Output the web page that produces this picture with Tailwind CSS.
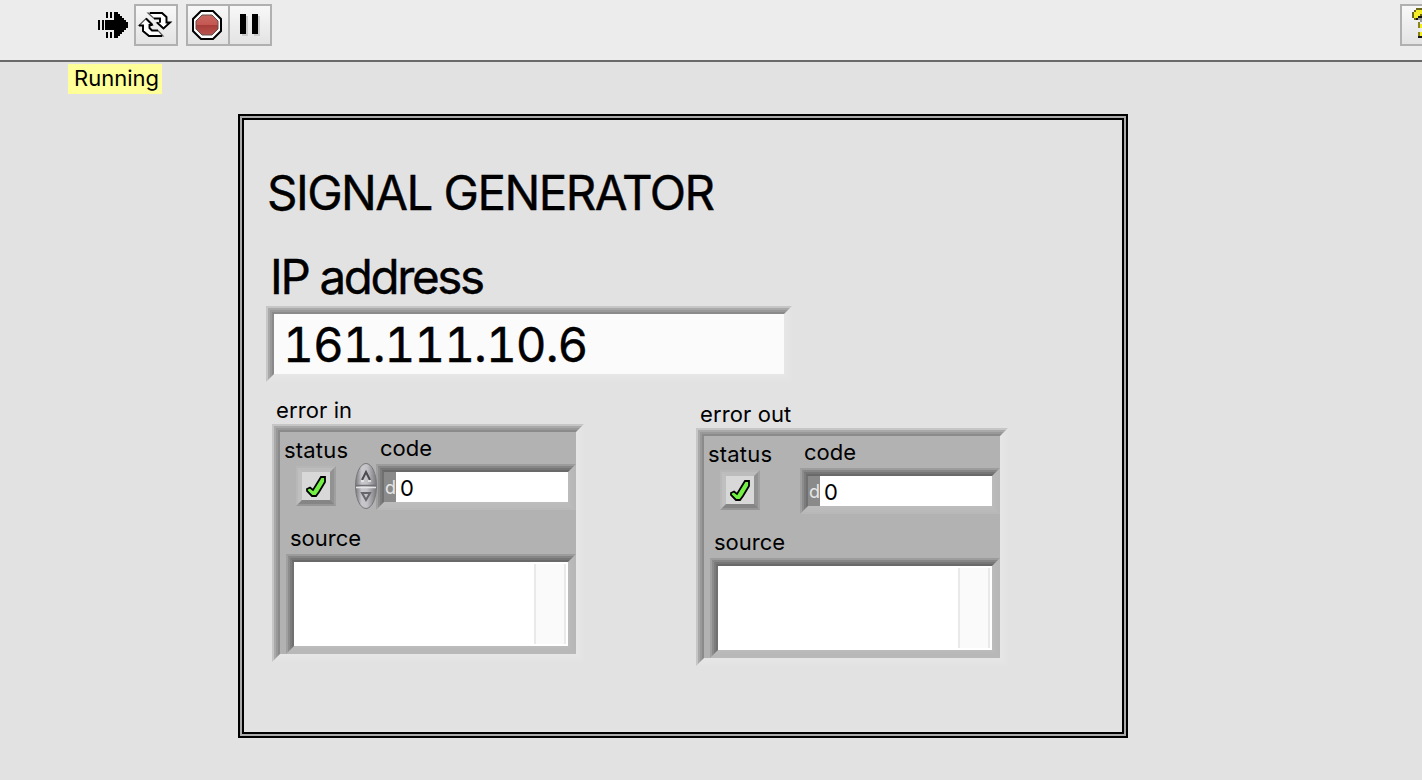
<!DOCTYPE html>
<html lang="en">
<head>
<meta charset="utf-8">
<title>Signal Generator</title>
<script src="https://cdn.jsdelivr.net/npm/@tailwindcss/browser@4"></script>
</head>
<body class="w-[1422px] h-[780px] overflow-hidden bg-[#e2e2e2] font-['Inter',sans-serif] text-black text-[22px] leading-[24px]">
<header class="h-[62px] border-b-2 border-[#6a6a6a] bg-[#ececec] flex items-start pt-1 pl-[96px]">
  <svg class="w-[34px] h-[42px] mr-1 shrink-0" viewBox="96 4 34 42" shape-rendering="crispEdges">
    <path d="M98 20h2v10h-2zM102 20h2v10h-2zM106 12h2v6h-2zM110 12h2v6h-2zM106 32h2v6h-2zM110 32h2v6h-2zM105 20h9v-8h4v2h2v2h2v2h2v2h2v2h2v6h-2v2h-2v2h-2v2h-2v2h-2v2h-4v-8h-9z"/>
  </svg>
  <div class="w-[44px] h-[42px] border-2 border-[#b0b0b0] bg-linear-to-b from-[#f8f8f8] to-[#e3e3e3] shrink-0">
    <svg class="w-[40px] h-[38px]" viewBox="2 2 40 38">
      <path d="M14 9H28L32.500 13V18.500H36L29.500 24.500L23 18.500H26V14.500H20ZM12 14.500L18.500 21H15.500V24L18 26.500H24L29 32H15L9 27V21.500H5Z" fill="#fff" stroke="#555" stroke-width="1.200"/>
      <path d="M16 9H28L32.500 13V18.500H36L29.500 24.500L23 18.500M20 14.500H26V18.500M5 21.500H9V27L15 32H28M18.500 21H15.500V24L18 26.500H24M12 14.500L18.500 21" fill="none" stroke="#000" stroke-width="1.900"/>
    </svg>
  </div>
  <div class="ml-2 w-[86px] h-[42px] border-2 border-[#b0b0b0] bg-linear-to-b from-[#f8f8f8] to-[#e3e3e3] flex shrink-0">
    <div class="w-[42px] border-r-2 border-[#b0b0b0]">
      <svg class="w-[40px] h-[38px]" viewBox="188 6 40 38">
        <defs><linearGradient id="red" x2="0" y2="1"><stop stop-color="#c96862"/><stop offset=".5" stop-color="#c45752"/><stop offset=".52" stop-color="#a83d39"/><stop offset="1" stop-color="#b95550"/></linearGradient></defs>
        <path d="M201 11h12l8 8v12l-8 8h-12l-8-8V19z" fill="#fff" stroke="#000" stroke-width="2"/>
        <path d="M202 15h10l6 6v8l-6 6h-10l-6-6v-8z" fill="url(#red)" stroke="#62504f" stroke-width="1"/>
      </svg>
    </div>
    <svg class="w-[40px] h-[38px]" viewBox="230 6 40 38" shape-rendering="crispEdges">
      <path d="M242 16h6v20h-6zM254 16h6v20h-6z" fill="#ccc"/><path d="M240 14h6v20h-6zM252 14h6v20h-6z"/>
    </svg>
  </div>
  <div class="ml-auto w-[22px] h-[42px] border-2 border-r-0 border-[#b0b0b0] bg-linear-to-b from-[#f8f8f8] to-[#e3e3e3] shrink-0">
    <svg class="w-[20px] h-[38px]" viewBox="1402 6 20 38" shape-rendering="crispEdges">
      <path d="M1416 8h6v2h-6zM1414 10h2v2h-2zM1412 12h2v6h-2zM1414 18h4v-2h2v-2h2v2h-2v2h-2v2h-4z" fill="#6b6716"/>
      <path d="M1416 10h6v4h-2v2h-2v2h-4v-6h2zM1420 24h2v4h-2zM1420 32h2v4h-2z" fill="#f5ec28"/>
      <path d="M1418 16h4v2h-2v2h-4v-2h2zM1418 36h4v2h-4z" fill="#111"/><path d="M1418 22h2v6h-2zM1418 32h2v4h-2z" fill="#8a841c"/><path d="M1418 18h4v4h-2v-2h-2z" fill="#999"/>
    </svg>
  </div>
</header>

<main>
  <div class="mt-[2px] ml-[68px] w-[94px] h-[30px] bg-[#ffff99] pl-[6px] pt-[2px] whitespace-nowrap">Running</div>
  <section class="mt-[20px] ml-[238px] w-[890px] h-[624px] border-2 border-black">
   <div class="h-full border-2 border-[#aaaaaa]">
    <div class="h-full border-2 border-black pl-[22px] pt-[49px]">
      <h1 class="pl-[1px] h-[48px] text-[47.500px] leading-[48px] tracking-[-1.550px] whitespace-nowrap [-webkit-text-stroke:0.400px_black]">SIGNAL GENERATOR</h1>
      <h2 class="pl-[4px] mt-[36px] h-[48px] text-[47.500px] leading-[48px] tracking-[-2.350px] whitespace-nowrap [-webkit-text-stroke:0.400px_black]">IP address</h2>
      <div class="mt-[5px] w-[526px] h-[76px] border-2 border-t-[#c6c6c6] border-l-[#c6c6c6] border-r-[#e3e3e3] border-b-[#e3e3e3]">
        <div class="h-full border-2 border-t-[#a9a9a9] border-l-[#a9a9a9] border-r-[#e4e4e4] border-b-[#e4e4e4]">
          <div class="h-full border-2 border-t-[#999] border-l-[#999] border-r-[#e5e5e5] border-b-[#e5e5e5]">
            <div class="h-full border-2 border-t-[#8a8a8a] border-l-[#8a8a8a] border-r-[#e6e6e6] border-b-[#e6e6e6] bg-[#fbfbfb] pl-[9px] text-[47.500px] leading-[62px] tabular-nums tracking-[-0.920px] whitespace-nowrap [-webkit-text-stroke:0.400px_black]">161.111.10.6</div>
          </div>
        </div>
      </div>

      <div class="mt-[16px] ml-[6px] flex items-start gap-[112px]">
        <div class="w-[312px]">
          <div class="h-[26px] pl-[4px] whitespace-nowrap tracking-[0.100px]">error in</div>
          <div class="h-[238px] border-2 border-t-[#c6c6c6] border-l-[#c6c6c6] border-r-[#e3e3e3] border-b-[#e3e3e3]">
           <div class="h-full border-2 border-t-[#a9a9a9] border-l-[#a9a9a9] border-r-[#e4e4e4] border-b-[#e4e4e4]">
            <div class="h-full border-2 border-t-[#999] border-l-[#999] border-r-[#e5e5e5] border-b-[#e5e5e5]">
             <div class="h-full border-2 border-t-[#8a8a8a] border-l-[#8a8a8a] border-r-[#e6e6e6] border-b-[#e6e6e6] bg-[#b2b2b2]">
              <div class="flex h-[78px]">
                <div class="w-[96px] pl-[4px] pt-[6px]">
                  <span class="inline-block tracking-[0.200px]">status</span>
                  <div class="ml-[12px] mt-[4px] w-[40px] h-[40px] border-2 border-t-[#b6b6b6] border-l-[#b8b8b8] border-r-[#a0a0a0] border-b-[#969696]">
                   <div class="h-full border-4 border-t-[#bcbcbc] border-l-[#bfbfbf] border-r-[#929292] border-b-[#858585] bg-[#d8d8d8]">
                    <svg class="w-[28px] h-[28px]" viewBox="0 0 28 28"><path d="M19 5H23V10L17 20L14 24H10L5 19V17L8 15.500L11 18Z" fill="#73f043" stroke="#000" stroke-width="1.800"/></svg>
                   </div>
                  </div>
                </div>
                <div class="relative w-[200px] pt-[4px]">
                  <span class="block pl-[4px] h-[28px]">code</span>
                  <div class="w-[200px] h-[46px] border-2 border-t-[#9c9c9c] border-l-[#a0a0a0] border-r-[#b7b7b7] border-b-[#b8b8b8]">
                   <div class="h-full border-2 border-t-[#868686] border-l-[#8c8c8c] border-r-[#b8b8b8] border-b-[#bababa]">
                    <div class="h-full border-2 border-t-[#767676] border-l-[#7c7c7c] border-r-[#b9b9b9] border-b-[#bbb]">
                     <div class="h-full border-2 border-t-[#696969] border-l-[#707070] border-r-[#bbb] border-b-[#bcbcbc] bg-white flex">
                      <span class="w-[12px] bg-[#8a8a8a] text-[#e6e6e6] text-[18px] leading-[32px] pl-[1px]">d</span><span class="pl-[4px] leading-[32px]">0</span>
                     </div>
                    </div>
                   </div>
                  </div>
                  <svg class="absolute left-[-22px] top-[30px] w-[24px] h-[48px]" viewBox="0 0 24 48">
                    <defs><linearGradient id="knob" x2="1" y2="0"><stop stop-color="#77777c"/><stop offset=".3" stop-color="#c9c9cd"/><stop offset=".55" stop-color="#c3c3c7"/><stop offset="1" stop-color="#77777c"/></linearGradient></defs>
                    <ellipse cx="12" cy="24" rx="10.500" ry="22.500" fill="url(#knob)" stroke="#77777c"/>
                    <path d="M2 23.500H22" stroke="#707075" stroke-width="1.500"/><path d="M2 25.500H22" stroke="#e4e4e7" stroke-width="1.500"/>
                    <path d="M8 18L12 10L16 18" fill="none" stroke="#4b4b50" stroke-width="2"/><path d="M7 19H10M14 19H17" stroke="#eee" stroke-width="1.500"/>
                    <path d="M8 31H16L12 38Z" fill="#c3c3c7" stroke="#66666b" stroke-width="2"/>
                  </svg>
                </div>
              </div>
              <div class="mt-[16px] pl-[10px] h-[28px]">source</div>
              <div class="ml-[6px] w-[290px] h-[100px] border-2 border-t-[#9c9c9c] border-l-[#a0a0a0] border-r-[#b7b7b7] border-b-[#b8b8b8]">
               <div class="h-full border-2 border-t-[#868686] border-l-[#8c8c8c] border-r-[#b8b8b8] border-b-[#b8b8b8]">
                <div class="h-full border-2 border-t-[#767676] border-l-[#7c7c7c] border-r-[#b9b9b9] border-b-[#b9b9b9]">
                 <div class="h-full border-2 border-t-[#696969] border-l-[#707070] border-r-[#bbb] border-b-[#bbb] bg-white flex justify-end p-[2px]">
                  <div class="w-[32px] border-x-2 border-[#e9e9e9] bg-[#fafafa]"></div>
                 </div>
                </div>
               </div>
              </div>
             </div>
            </div>
           </div>
          </div>
        </div>

        <div class="w-[312px] mt-[4px]">
          <div class="h-[26px] pl-[4px] whitespace-nowrap tracking-[0.100px]">error out</div>
          <div class="h-[238px] border-2 border-t-[#c6c6c6] border-l-[#c6c6c6] border-r-[#e3e3e3] border-b-[#e3e3e3]">
           <div class="h-full border-2 border-t-[#a9a9a9] border-l-[#a9a9a9] border-r-[#e4e4e4] border-b-[#e4e4e4]">
            <div class="h-full border-2 border-t-[#999] border-l-[#999] border-r-[#e5e5e5] border-b-[#e5e5e5]">
             <div class="h-full border-2 border-t-[#8a8a8a] border-l-[#8a8a8a] border-r-[#e6e6e6] border-b-[#e6e6e6] bg-[#b2b2b2]">
              <div class="flex h-[78px]">
                <div class="w-[96px] pl-[4px] pt-[6px]">
                  <span class="inline-block tracking-[0.200px]">status</span>
                  <div class="ml-[12px] mt-[4px] w-[40px] h-[40px] border-2 border-t-[#b6b6b6] border-l-[#b8b8b8] border-r-[#a0a0a0] border-b-[#969696]">
                   <div class="h-full border-4 border-t-[#bcbcbc] border-l-[#bfbfbf] border-r-[#929292] border-b-[#858585] bg-[#d8d8d8]">
                    <svg class="w-[28px] h-[28px]" viewBox="0 0 28 28"><path d="M19 5H23V10L17 20L14 24H10L5 19V17L8 15.500L11 18Z" fill="#73f043" stroke="#000" stroke-width="1.800"/></svg>
                   </div>
                  </div>
                </div>
                <div class="w-[200px] pt-[4px]">
                  <span class="block pl-[4px] h-[28px]">code</span>
                  <div class="w-[200px] h-[46px] border-2 border-t-[#9c9c9c] border-l-[#a0a0a0] border-r-[#b7b7b7] border-b-[#b8b8b8]">
                   <div class="h-full border-2 border-t-[#868686] border-l-[#8c8c8c] border-r-[#b8b8b8] border-b-[#bababa]">
                    <div class="h-full border-2 border-t-[#767676] border-l-[#7c7c7c] border-r-[#b9b9b9] border-b-[#bbb]">
                     <div class="h-full border-2 border-t-[#696969] border-l-[#707070] border-r-[#bbb] border-b-[#bcbcbc] bg-white flex">
                      <span class="w-[12px] bg-[#8a8a8a] text-[#e6e6e6] text-[18px] leading-[32px] pl-[1px]">d</span><span class="pl-[4px] leading-[32px]">0</span>
                     </div>
                    </div>
                   </div>
                  </div>
                </div>
              </div>
              <div class="mt-[16px] pl-[10px] h-[28px]">source</div>
              <div class="ml-[6px] w-[290px] h-[100px] border-2 border-t-[#9c9c9c] border-l-[#a0a0a0] border-r-[#b7b7b7] border-b-[#b8b8b8]">
               <div class="h-full border-2 border-t-[#868686] border-l-[#8c8c8c] border-r-[#b8b8b8] border-b-[#b8b8b8]">
                <div class="h-full border-2 border-t-[#767676] border-l-[#7c7c7c] border-r-[#b9b9b9] border-b-[#b9b9b9]">
                 <div class="h-full border-2 border-t-[#696969] border-l-[#707070] border-r-[#bbb] border-b-[#bbb] bg-white flex justify-end p-[2px]">
                  <div class="w-[32px] border-x-2 border-[#e9e9e9] bg-[#fafafa]"></div>
                 </div>
                </div>
               </div>
              </div>
             </div>
            </div>
           </div>
          </div>
        </div>
      </div>
    </div>
   </div>
  </section>
</main>
</body>
</html>
